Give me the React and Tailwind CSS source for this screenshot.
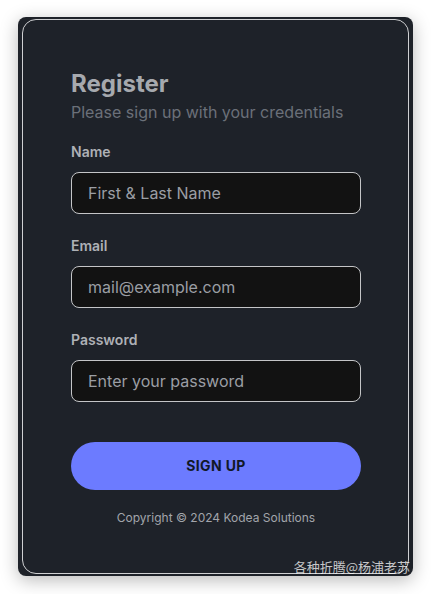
import React from "react";

const fields = [
  { id: "name", label: "Name", type: "text", placeholder: "First & Last Name" },
  { id: "email", label: "Email", type: "email", placeholder: "mail@example.com" },
  { id: "password", label: "Password", type: "password", placeholder: "Enter your password" },
];

export default function App() {
  return (
    <div className="min-h-screen bg-white pt-[17px] pl-[18px] font-['Inter','Noto_Sans',sans-serif]">
      <div className="relative w-[395px] h-[559px] rounded-lg bg-[#1e2229] px-1 py-0.5 shadow-[0_4px_18px_rgba(0,0,0,0.28)]">
        <div className="h-full rounded-[14px] border border-[#cfd0d2] pl-12 pr-[47px] pt-12">
          {/* Header */}
          <h1 className="text-2xl leading-8 font-bold text-[#a6a9ae]">Register</h1>
          <p className="text-base leading-6 text-[#6b7079]">Please sign up with your credentials</p>

          {/* Form */}
          <form className="mt-[18px]" onSubmit={(e) => e.preventDefault()}>
            {fields.map((f) => (
              <div key={f.id} className="mb-[22px]">
                <label htmlFor={f.id} className="block text-sm leading-5 font-semibold text-[#aeb1b6] mb-2.5">
                  {f.label}
                </label>
                <input
                  id={f.id}
                  type={f.type}
                  placeholder={f.placeholder}
                  className="block w-full h-[42px] rounded-lg border border-[#c4c5c7] bg-[#121212] px-4 text-base text-[#d1d5db] placeholder:text-[#9b9ea4] outline-none"
                />
              </div>
            ))}
            <button
              type="submit"
              className="mt-[18px] w-full h-12 rounded-full bg-[#6c7bff] text-sm font-bold text-[#111827] tracking-wide"
            >
              SIGN UP
            </button>
          </form>

          <p className="mt-5 text-center text-xs leading-4 text-[#a2a5ab]">
            Copyright © 2024 Kodea Solutions
          </p>
        </div>

        {/* watermark */}
        <span className="absolute right-[3px] bottom-[1px] text-[13px] leading-4 text-white/75 font-['Noto_Sans_CJK_SC',sans-serif]">
          各种折腾@杨浦老苏
        </span>
      </div>
    </div>
  );
}
